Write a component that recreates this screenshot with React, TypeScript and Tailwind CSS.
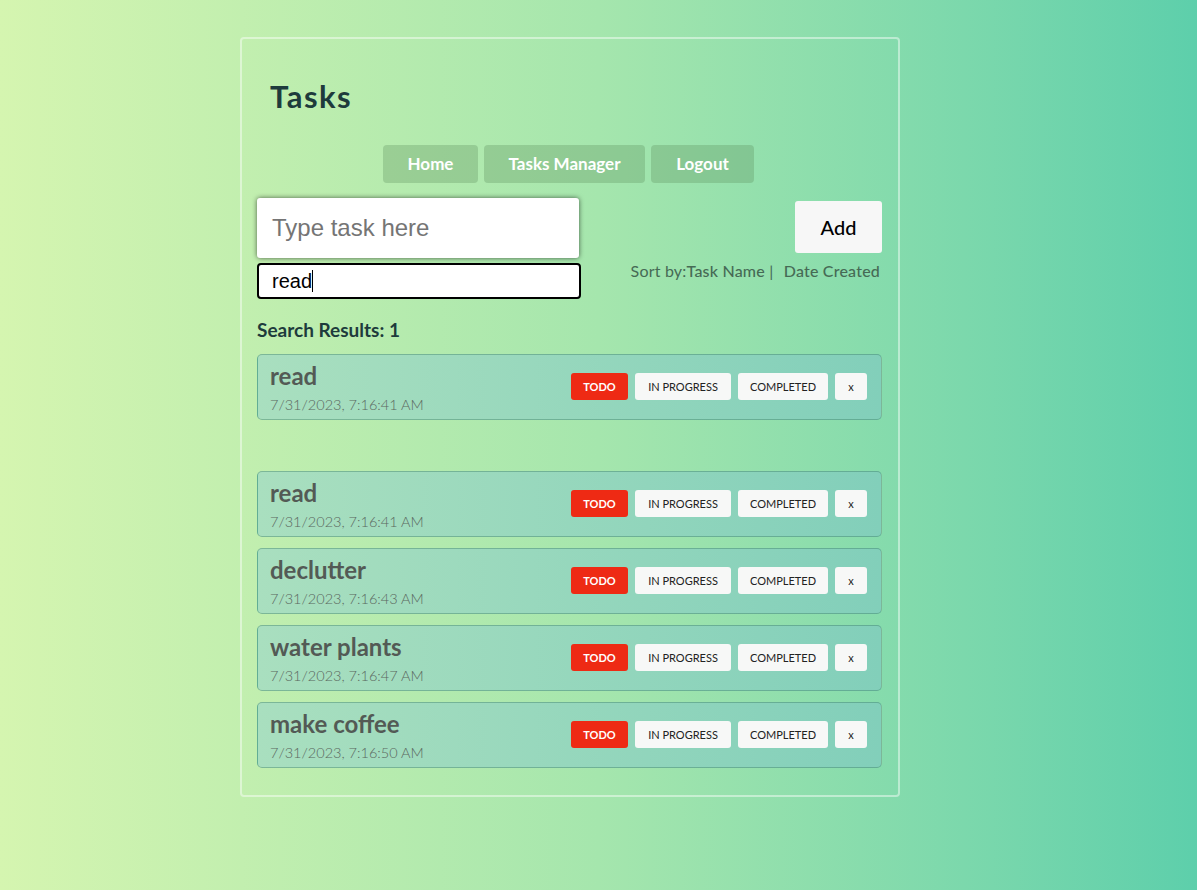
import React from "react";

const tasks = [
  { name: "read", date: "7/31/2023, 7:16:41 AM" },
  { name: "declutter", date: "7/31/2023, 7:16:43 AM" },
  { name: "water plants", date: "7/31/2023, 7:16:47 AM" },
  { name: "make coffee", date: "7/31/2023, 7:16:50 AM" },
];

const font = { fontFamily: "Lato, 'Open Sans', sans-serif" };

function TaskItem({ name, date }: { name: string; date: string }) {
  return (
    <div className="flex h-[66px] items-center justify-between rounded-[5px] border border-[rgba(40,110,80,0.35)] bg-gradient-to-r from-[#a9dfbf] to-[#82cfba] pl-[12px] pr-[14px]">
      <div className="flex flex-col self-start pt-[7px]">
        <div className="text-[24px] font-bold leading-[28px] text-[#535a55]">{name}</div>
        <div className="mt-[6px] text-[14.5px] font-light leading-[18px] text-[#5b685f]">{date}</div>
      </div>
      <div className="flex items-center gap-[7px] text-[11px] leading-none">
        <button className="h-[27px] w-[57px] rounded-[3px] bg-[#ee2a14] font-bold text-white">TODO</button>
        <button className="h-[27px] w-[96px] rounded-[3px] bg-[#f7f8f7] text-[#222]">IN PROGRESS</button>
        <button className="h-[27px] w-[90px] rounded-[3px] bg-[#f7f8f7] text-[#222]">COMPLETED</button>
        <button className="h-[27px] w-[32px] rounded-[3px] bg-[#f7f8f7] text-[#222]">x</button>
      </div>
    </div>
  );
}

export default function App() {
  return (
    <div className="min-h-[890px] w-full bg-gradient-to-r from-[#d5f5b0] via-[#a5e6ad] to-[#5dcfab]" style={font}>
      <div className="flex justify-center pt-[37px] pr-[57px]">
        <div className="w-[660px] rounded-[4px] border-2 border-[rgba(255,255,255,0.45)] pl-[15px] pr-[16px] pb-[27px] pt-[35px]">
          <h1 className="pl-[13px] text-[31px] font-bold leading-[44px] tracking-[1.5px] text-[#1e3b3c]">Tasks</h1>
          <div className="mt-[27px] flex justify-center gap-[6px] pr-[2px]">
            <button className="h-[38px] w-[95px] rounded-[4px] bg-[rgba(90,140,90,0.3)] text-[17px] font-bold text-white">Home</button>
            <button className="h-[38px] w-[161px] rounded-[4px] bg-[rgba(90,140,90,0.3)] text-[17px] font-bold text-white">Tasks Manager</button>
            <button className="h-[38px] w-[103px] rounded-[4px] bg-[rgba(90,140,90,0.3)] text-[17px] font-bold text-white">Logout</button>
          </div>
          <div className="mt-[15px] flex justify-between">
            <div className="flex flex-col gap-[5px]">
              <div className="flex h-[60px] w-[322px] items-center rounded-[3px] bg-white pl-[15px] shadow-[0_0_5px_rgba(0,0,0,0.6)]">
                <span className="text-[24px] text-[#757575]" style={{ fontFamily: "'Liberation Sans', Arial, sans-serif" }}>Type task here</span>
              </div>
              <div className="flex h-[36px] w-[324px] items-center rounded-[4px] border-2 border-black bg-white pl-[13px]">
                <span className="text-[20px] text-black" style={{ fontFamily: "'Liberation Sans', Arial, sans-serif" }}>read</span>
                <span className="h-[22px] w-px bg-black" />
              </div>
            </div>
            <div className="flex flex-col items-end pt-[3px]">
              <button className="h-[52px] w-[87px] rounded-[3px] bg-[#f7f7f7] text-[20px] font-medium text-black">Add</button>
              <div className="mt-[6px] pr-[2px] text-[16px] tracking-[0.2px] text-[#466a55]">
                <span>Sort by:</span>
                <span className="font-medium">Task Name</span>
                <span> | </span>
                <span className="ml-[6px] font-medium">Date Created</span>
              </div>
            </div>
          </div>
          <div className="mt-[17px] text-[19px] font-bold text-[#1e3b3c]">Search Results: 1</div>
          <div className="mt-[9px]">
            <TaskItem name="read" date="7/31/2023, 7:16:41 AM" />
          </div>
          <div className="mt-[51px] flex flex-col gap-[11px]">
            {tasks.map((t) => (
              <TaskItem key={t.name} name={t.name} date={t.date} />
            ))}
          </div>
        </div>
      </div>
    </div>
  );
}
